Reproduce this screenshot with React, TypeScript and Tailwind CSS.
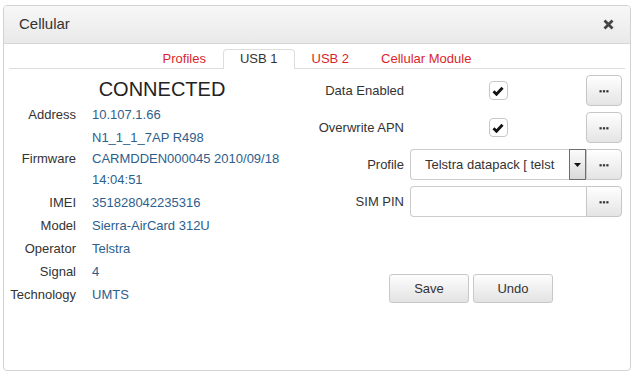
import React from 'react';

const font = { fontFamily: '"Liberation Sans", Arial, sans-serif' };

const Dots = () => (
  <svg width="10" height="4" viewBox="0 0 10 4">
    <rect x="0.5" y="1.2" width="2.2" height="2.2" fill="#333" />
    <rect x="3.9" y="1.2" width="2.2" height="2.2" fill="#333" />
    <rect x="7.3" y="1.2" width="2.2" height="2.2" fill="#333" />
  </svg>
);

const MoreButton = ({ joined }: { joined?: boolean }) => (
  <button
    className={
      'w-[36px] h-[31px] flex items-center justify-center border border-[#c6c6c6] bg-gradient-to-b from-[#ffffff] to-[#e4e4e4] ' +
      (joined ? 'rounded-r-[4px]' : 'rounded-[4px]')
    }
  >
    <Dots />
  </button>
);

const Check = () => (
  <div className="w-[19px] h-[19px] border border-[#c8c8c8] rounded-[4px] bg-white flex items-center justify-center">
    <svg width="12" height="10" viewBox="0 0 12 10">
      <path d="M1.5 5.2 L4.5 8.2 L10.5 1.8" stroke="#141414" strokeWidth="2.9" fill="none" />
    </svg>
  </div>
);

const info: [string, string[]][] = [
  ['Address', ['10.107.1.66']],
  ['Firmware', ['N1_1_1_7AP R498', 'CARMDDEN000045 2010/09/18', '14:04:51']],
  ['IMEI', ['351828042235316']],
  ['Model', ['Sierra-AirCard 312U']],
  ['Operator', ['Telstra']],
  ['Signal', ['4']],
  ['Technology', ['UMTS']],
];

const tabs = ['Profiles', 'USB 1', 'USB 2', 'Cellular Module'];

export default function App() {
  return (
    <div className="w-[635px] h-[375px] bg-white pt-[5px] pl-[3px] text-[13px] text-[#333]" style={font}>
      <div className="w-[628px] h-[366px] border border-[#d2d2d2] rounded-[4px] flex flex-col overflow-hidden">
        <div className="h-[38px] shrink-0 flex items-center justify-between pl-[15px] pr-[16px] bg-gradient-to-b from-[#f7f7f7] to-[#e9e9e9] border-b border-[#d6d6d6]">
          <span className="text-[15px] text-[#333]">Cellular</span>
          <svg width="11" height="11" viewBox="0 0 11 11">
            <path d="M1.5 1.5 L9.5 9.5 M9.5 1.5 L1.5 9.5" stroke="#444" strokeWidth="2.8" />
          </svg>
        </div>

        <div className="px-[5px] pt-[5px]">
          <div className="flex justify-center gap-[2px] border-b border-[#dddddd] h-[20px]">
            {tabs.map(t =>
              t === 'USB 1' ? (
                <div
                  key={t}
                  className="px-[16px] h-[20px] leading-[18px] border border-b-0 border-[#dddddd] rounded-t-[4px] bg-white text-[#333]"
                >
                  {t}
                </div>
              ) : (
                <div key={t} className="px-[15px] h-[19px] leading-[19px] text-[#dc1f2d]">
                  {t}
                </div>
              )
            )}
          </div>

          <div className="flex">
            <div className="w-[306px]">
              <div className="mt-[8px] text-[20px] leading-[24px] text-center text-[#222]">CONNECTED</div>
              <div className="mt-[2px] flex flex-col">
                {info.map(([label, lines]) => (
                  <div key={label} className="flex items-center py-[1px] leading-[21px]">
                    <div className="w-[67px] text-right shrink-0">{label}</div>
                    <div className="ml-[16px] text-[#2d5e8c]">
                      {lines.map(l => (
                        <div key={l}>{l}</div>
                      ))}
                    </div>
                  </div>
                ))}
              </div>
            </div>

            <div className="flex-1 pt-[6px]">
              <div className="flex flex-col gap-[6px]">
                <div className="flex items-center h-[31px]">
                  <div className="w-[89px] text-right">Data Enabled</div>
                  <div className="ml-[6px] w-[176px] flex justify-center">
                    <Check />
                  </div>
                  <MoreButton />
                </div>
                <div className="flex items-center h-[31px]">
                  <div className="w-[89px] text-right whitespace-nowrap">Overwrite APN</div>
                  <div className="ml-[6px] w-[176px] flex justify-center">
                    <Check />
                  </div>
                  <MoreButton />
                </div>
                <div className="flex items-center h-[31px]">
                  <div className="w-[89px] text-right">Profile</div>
                  <div className="ml-[6px] w-[176px] h-[31px] flex">
                    <div className="flex-1 border border-r-0 border-[#cccccc] rounded-l-[4px] pl-[14px] leading-[29px] overflow-hidden whitespace-nowrap text-[#333]">
                      Telstra datapack [ telst
                    </div>
                    <div className="w-[17px] h-[31px] border border-[#6e6e6e] bg-gradient-to-b from-[#fbfbfb] to-[#d9d9d9] flex items-center justify-center">
                      <svg width="7" height="4" viewBox="0 0 7 4">
                        <path d="M0 0 L7 0 L3.5 4 Z" fill="#111" />
                      </svg>
                    </div>
                  </div>
                  <MoreButton joined />
                </div>
                <div className="flex items-center h-[31px]">
                  <div className="w-[89px] text-right">SIM PIN</div>
                  <div className="ml-[6px] w-[176px] h-[31px] border border-r-0 border-[#cccccc] rounded-l-[4px] bg-white" />
                  <MoreButton joined />
                </div>
              </div>

              <div className="mt-[57px] flex justify-center gap-[4px] pl-[2px]">
                <button className="w-[80px] h-[29px] border border-[#c8c8c8] rounded-[3px] bg-gradient-to-b from-[#fdfdfd] to-[#e3e3e3] text-[#333]">
                  Save
                </button>
                <button className="w-[80px] h-[29px] border border-[#c8c8c8] rounded-[3px] bg-gradient-to-b from-[#fdfdfd] to-[#e3e3e3] text-[#333]">
                  Undo
                </button>
              </div>
            </div>
          </div>
        </div>
      </div>
    </div>
  );
}
